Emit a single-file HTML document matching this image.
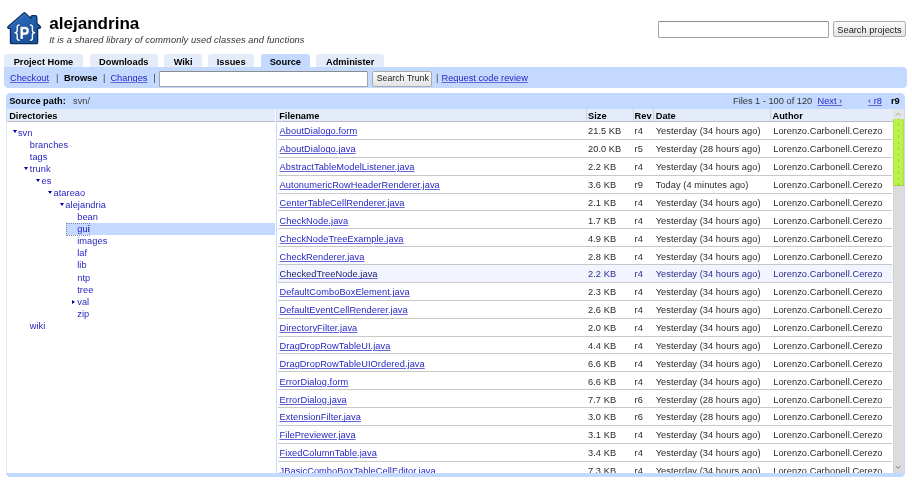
<!DOCTYPE html>
<html><head><meta charset="utf-8">
<style>
html,body{margin:0;padding:0;background:#fff;overflow:hidden}
#pg{will-change:transform;position:relative;width:1280px;height:696px;zoom:0.7125;font-family:"Liberation Sans",sans-serif;font-size:13px;color:#000;overflow:hidden}
a{color:#2626c2;text-decoration-color:#6666d6}
.abs{position:absolute}
.t{position:absolute;line-height:17px;white-space:nowrap}
.sepb{color:#444}
#pname{left:69px;top:18.5px;font-size:24px;font-weight:bold;line-height:32px;white-space:nowrap}
#psum{left:69px;top:48px;letter-spacing:0.14px;font-size:13px;font-style:italic;line-height:17px;white-space:nowrap;color:#333}
.inp{border:1px solid #a4a4a4;border-top-color:#8c8c8c;border-radius:2px;background:#fff;box-sizing:border-box}
.btn{border:1px solid #aaa;border-radius:3px;background:linear-gradient(#fbfbfb,#e3e3e3);box-sizing:border-box;font-size:13px;color:#222;text-align:center;white-space:nowrap}
.tab{position:absolute;top:76.4px;height:17.6px;background:#e5ecf9;border-radius:4px 4px 0 0;font-weight:bold;text-align:center;line-height:24.1px;white-space:nowrap;overflow:hidden}
.tab.on{background:#c3d9ff}
#subnav{left:6px;top:94px;width:1267px;height:30px;background:#c3d9ff;border-radius:0 6px 6px 6px}
#srcbar{left:9px;top:131px;width:1261px;height:538px;background:#c3d9ff;border-radius:6px}
#dirs{left:10px;top:152.7px;width:1243.5px;height:511px;background:#fff}
.hdr{position:absolute;top:0;height:17.5px;background:#e5ecf9;border-bottom:1px solid #bbc;font-weight:bold;line-height:19px;white-space:nowrap}
.hdr.h{box-sizing:border-box;padding-left:3px;border-left:1px solid #fff;background:transparent;border-bottom:none;height:18px}
#files{left:387.6px;top:152.7px;width:1px;height:511px;background:#c3d9ff}
.hb{top:152.7px;height:16.7px;background:#e5ecf9;border-bottom:1px solid #bbc}
.vd{top:152.7px;width:1px;height:17px;background:#cfd3dd}
#sb{left:1253.8px;top:152.7px;width:15.4px;height:510.9px;background:#dcdcdc;box-shadow:inset 1px 0 0 #d0d0d0}
.thumb{background:#bcf24c radial-gradient(circle at 50% 50%,rgba(110,160,30,.45) 0,rgba(110,160,30,.45) 0.9px,transparent 1.4px) 0 4px/15px 8.4px;box-shadow:inset 1px 0 0 #a8de3a,inset -1px 0 0 #a2d834,inset 0 -1px 0 #98cc2c}
.tree .ti{position:absolute;height:17px;line-height:17px;color:#2626c2;white-space:nowrap;letter-spacing:0.08px}
.tri{position:absolute;left:-7.5px;top:5.2px;width:0;height:0;border-left:3.5px solid transparent;border-right:3.5px solid transparent;border-top:4.6px solid #00a}
.trir{position:absolute;left:-7.6px;top:6px;width:0;height:0;border-top:3.6px solid transparent;border-bottom:3.6px solid transparent;border-left:4.4px solid #00a}
.selbg{position:absolute;left:93px;width:293px;height:16.5px;margin-top:0;background:#c3d9ff}
.focus{position:absolute;width:30.5px;height:15.5px;margin-top:0;border:1px dotted #8088a8}
.files .r{position:absolute;left:0;top:0;width:1px;height:17px;line-height:17px;white-space:nowrap;color:#2a2a2a;letter-spacing:0.08px}
.files .r a,.files .r span{position:absolute;top:0}
.files .sep{position:absolute;left:389.5px;width:862.5px;height:1px;background:#c8c8c8}
.files .hovbg{position:absolute;left:389.5px;width:864px;background:#f2f4ff}
.files .hov span{color:#2c2c8c}
.files .hov a{color:#202070}
</style></head><body>
<div id="pg">
 <!-- logo -->
 <svg class="abs" style="left:0;top:0" width="84.21" height="70.18" viewBox="0 0 60 50">
  <defs><linearGradient id="hg" x1="0" y1="0" x2="0.6" y2="1"><stop offset="0" stop-color="#2c70c4"/><stop offset="1" stop-color="#1a5099"/></linearGradient></defs>
  <path d="M23.6 13.2 Q24.4 12.4 25.2 13.2 L30.9 18.4 L30.9 17.2 Q30.9 15.6 32.5 15.6 L35.2 15.6 Q36.8 15.6 36.8 17.2 L36.9 23.4 L40.3 26.5 Q41 27.8 39.6 28.2 L37.6 28.4 L37.6 42.4 Q37.6 43.6 36.4 43.6 L11.7 43.6 Q10.5 43.6 10.5 42.4 L10.5 28.6 L8.6 28.4 Q7.2 28 8 26.8 Z" fill="url(#hg)" stroke="#0b2c60" stroke-width="1.4" stroke-linejoin="round"/>
  <path d="M9.4 26.9 L24.4 13.8 L30 18.9" fill="none" stroke="#5c93dc" stroke-width="0.7" opacity="0.7"/>
  <g fill="none" stroke="#0d3570" stroke-width="3" stroke-linecap="round" stroke-linejoin="round" opacity="0.55">
   <path d="M19.2 25 Q17.2 25 17.2 27 L17.2 30.6 Q17.2 32.5 15 32.7 Q17.2 32.9 17.2 34.8 L17.2 38.2 Q17.2 40.2 19.2 40.2"/>
   <path d="M30.4 25 Q32.4 25 32.4 27 L32.4 30.6 Q32.4 32.5 34.6 32.7 Q32.4 32.9 32.4 34.8 L32.4 38.2 Q32.4 40.2 30.4 40.2"/>
  </g>
  <g fill="none" stroke="#f4f8ff" stroke-width="1.5" stroke-linecap="round" stroke-linejoin="round">
   <path d="M19.2 25 Q17.2 25 17.2 27 L17.2 30.6 Q17.2 32.5 15 32.7 Q17.2 32.9 17.2 34.8 L17.2 38.2 Q17.2 40.2 19.2 40.2"/>
   <path d="M30.4 25 Q32.4 25 32.4 27 L32.4 30.6 Q32.4 32.5 34.6 32.7 Q32.4 32.9 32.4 34.8 L32.4 38.2 Q32.4 40.2 30.4 40.2"/>
  </g>
  <path d="M20.3 26.8 L25.6 26.8 Q29 26.8 29 30.8 Q29 34.9 25.6 34.9 L23.1 34.9 L23.1 39.1 L20.3 39.1 Z M23.1 29.2 L23.1 32.3 L25.2 32.3 Q26.3 32.3 26.3 30.75 Q26.3 29.2 25.2 29.2 Z" fill="#fff" fill-rule="evenodd" stroke="#0d3570" stroke-width="0.5" stroke-opacity="0.5"/>
 </svg>
 <div id="pname" class="abs">alejandrina</div>
 <div id="psum" class="abs">It is a shared library of commonly used classes and functions</div>
 <div class="abs inp" style="left:923px;top:30px;width:240px;height:22.8px"></div>
 <div class="abs btn" style="left:1169.3px;top:30px;width:102.2px;height:21.5px"></div>
 <div class="t" style="left:1175.2px;top:33.9px;color:#222">Search projects</div>

 <div class="tab" style="left:6px;width:110px">Project Home</div>
 <div class="tab" style="left:126px;width:95.5px">Downloads</div>
 <div class="tab" style="left:230px;width:54px">Wiki</div>
 <div class="tab" style="left:292px;width:65px">Issues</div>
 <div class="tab on" style="left:366px;width:69px">Source</div>
 <div class="tab" style="left:444px;width:95px">Administer</div>

 <div id="subnav" class="abs"></div>
 <div class="t" style="left:14px;top:101.2px"><a href="#">Checkout</a></div>
 <div class="t sepb" style="left:78.5px;top:101.2px">|</div>
 <div class="t" style="left:89.8px;top:101.2px"><b>Browse</b></div>
 <div class="t sepb" style="left:144.5px;top:101.2px">|</div>
 <div class="t" style="left:155px;top:101.2px"><a href="#">Changes</a></div>
 <div class="t sepb" style="left:215.2px;top:101.2px">|</div>
 <div class="abs inp" style="left:223px;top:99.5px;width:293px;height:22.3px"></div>
 <div class="abs btn" style="left:522px;top:99px;width:84.6px;height:22.5px"></div>
 <div class="t" style="left:528.8px;top:101.2px;font-size:12.3px;color:#222">Search Trunk</div>
 <div class="t sepb" style="left:611.8px;top:101.2px">|</div>
 <div class="t" style="left:619.6px;top:101.2px"><a href="#">Request code review</a></div>

 <div id="srcbar" class="abs"></div>
 <div class="t" style="left:12.9px;top:133.2px"><b>Source path:</b></div>
 <div class="t" style="left:102.5px;top:133.2px;color:#444">svn/</div>
 <div class="t" style="left:1028.8px;top:134px;color:#333">Files 1 - 100 of 120</div>
 <div class="t" style="left:1147.4px;top:134px"><a href="#">Next ›</a></div>
 <div class="t" style="left:1218.3px;top:134px"><a href="#">‹ r8</a></div>
 <div class="t" style="left:1250.5px;top:134px"><b>r9</b></div>

 <div id="dirs" class="abs"></div>
 <div class="abs" style="left:9px;top:170px;width:1px;height:493.6px;background:#e0eaff"></div>
 <div class="abs hb" style="left:10px;width:376px"></div>
 <div class="abs hb" style="left:388.6px;width:865px"></div>
 <div class="abs vd" style="left:823px"></div>
 <div class="abs vd" style="left:888px"></div>
 <div class="abs vd" style="left:916.8px"></div>
 <div class="abs vd" style="left:1081.3px"></div>
 <div class="t" style="left:12.9px;top:153.8px"><b>Directories</b></div>
 <div class="t" style="left:391.9px;top:153.8px"><b>Filename</b></div>
 <div class="t" style="left:825.3px;top:153.8px"><b>Size</b></div>
 <div class="t" style="left:890.7px;top:153.8px"><b>Rev</b></div>
 <div class="t" style="left:920.3px;top:153.8px"><b>Date</b></div>
 <div class="t" style="left:1084.2px;top:153.8px"><b>Author</b></div>
 <div id="files" class="abs"></div>
 <div class="files" style="position:absolute;left:0;top:0;width:1280px;height:663.6px;overflow:hidden">
<div class="hovbg" style="top:371.63px;height:24.09px"></div>
<div class="sep" style="top:195.00px"></div>
<div class="r" style="top:176.10px"><a href="#" style="left:392.4px">AboutDialogo.form</a><span style="left:825.3px">21.5 KB</span><span style="left:890.7px">r4</span><span style="left:920.3px">Yesterday (34 hours ago)</span><span style="left:1085.2px">Lorenzo.Carbonell.Cerezo</span></div>
<div class="sep" style="top:220.09px"></div>
<div class="r" style="top:201.19px"><a href="#" style="left:392.4px">AboutDialogo.java</a><span style="left:825.3px">20.0 KB</span><span style="left:890.7px">r5</span><span style="left:920.3px">Yesterday (28 hours ago)</span><span style="left:1085.2px">Lorenzo.Carbonell.Cerezo</span></div>
<div class="sep" style="top:245.18px"></div>
<div class="r" style="top:226.28px"><a href="#" style="left:392.4px">AbstractTableModelListener.java</a><span style="left:825.3px">2.2 KB</span><span style="left:890.7px">r4</span><span style="left:920.3px">Yesterday (34 hours ago)</span><span style="left:1085.2px">Lorenzo.Carbonell.Cerezo</span></div>
<div class="sep" style="top:270.27px"></div>
<div class="r" style="top:251.37px"><a href="#" style="left:392.4px">AutonumericRowHeaderRenderer.java</a><span style="left:825.3px">3.6 KB</span><span style="left:890.7px">r9</span><span style="left:920.3px">Today (4 minutes ago)</span><span style="left:1085.2px">Lorenzo.Carbonell.Cerezo</span></div>
<div class="sep" style="top:295.36px"></div>
<div class="r" style="top:276.46px"><a href="#" style="left:392.4px">CenterTableCellRenderer.java</a><span style="left:825.3px">2.1 KB</span><span style="left:890.7px">r4</span><span style="left:920.3px">Yesterday (34 hours ago)</span><span style="left:1085.2px">Lorenzo.Carbonell.Cerezo</span></div>
<div class="sep" style="top:320.45px"></div>
<div class="r" style="top:301.55px"><a href="#" style="left:392.4px">CheckNode.java</a><span style="left:825.3px">1.7 KB</span><span style="left:890.7px">r4</span><span style="left:920.3px">Yesterday (34 hours ago)</span><span style="left:1085.2px">Lorenzo.Carbonell.Cerezo</span></div>
<div class="sep" style="top:345.54px"></div>
<div class="r" style="top:326.64px"><a href="#" style="left:392.4px">CheckNodeTreeExample.java</a><span style="left:825.3px">4.9 KB</span><span style="left:890.7px">r4</span><span style="left:920.3px">Yesterday (34 hours ago)</span><span style="left:1085.2px">Lorenzo.Carbonell.Cerezo</span></div>
<div class="sep" style="top:370.63px"></div>
<div class="r" style="top:351.73px"><a href="#" style="left:392.4px">CheckRenderer.java</a><span style="left:825.3px">2.8 KB</span><span style="left:890.7px">r4</span><span style="left:920.3px">Yesterday (34 hours ago)</span><span style="left:1085.2px">Lorenzo.Carbonell.Cerezo</span></div>
<div class="sep" style="top:395.72px"></div>
<div class="r hov" style="top:376.82px"><a href="#" style="left:392.4px">CheckedTreeNode.java</a><span style="left:825.3px">2.2 KB</span><span style="left:890.7px">r4</span><span style="left:920.3px">Yesterday (34 hours ago)</span><span style="left:1085.2px">Lorenzo.Carbonell.Cerezo</span></div>
<div class="sep" style="top:420.81px"></div>
<div class="r" style="top:401.91px"><a href="#" style="left:392.4px">DefaultComboBoxElement.java</a><span style="left:825.3px">2.3 KB</span><span style="left:890.7px">r4</span><span style="left:920.3px">Yesterday (34 hours ago)</span><span style="left:1085.2px">Lorenzo.Carbonell.Cerezo</span></div>
<div class="sep" style="top:445.90px"></div>
<div class="r" style="top:427.00px"><a href="#" style="left:392.4px">DefaultEventCellRenderer.java</a><span style="left:825.3px">2.6 KB</span><span style="left:890.7px">r4</span><span style="left:920.3px">Yesterday (34 hours ago)</span><span style="left:1085.2px">Lorenzo.Carbonell.Cerezo</span></div>
<div class="sep" style="top:470.99px"></div>
<div class="r" style="top:452.09px"><a href="#" style="left:392.4px">DirectoryFilter.java</a><span style="left:825.3px">2.0 KB</span><span style="left:890.7px">r4</span><span style="left:920.3px">Yesterday (34 hours ago)</span><span style="left:1085.2px">Lorenzo.Carbonell.Cerezo</span></div>
<div class="sep" style="top:496.08px"></div>
<div class="r" style="top:477.18px"><a href="#" style="left:392.4px">DragDropRowTableUI.java</a><span style="left:825.3px">4.4 KB</span><span style="left:890.7px">r4</span><span style="left:920.3px">Yesterday (34 hours ago)</span><span style="left:1085.2px">Lorenzo.Carbonell.Cerezo</span></div>
<div class="sep" style="top:521.17px"></div>
<div class="r" style="top:502.27px"><a href="#" style="left:392.4px">DragDropRowTableUIOrdered.java</a><span style="left:825.3px">6.6 KB</span><span style="left:890.7px">r4</span><span style="left:920.3px">Yesterday (34 hours ago)</span><span style="left:1085.2px">Lorenzo.Carbonell.Cerezo</span></div>
<div class="sep" style="top:546.26px"></div>
<div class="r" style="top:527.36px"><a href="#" style="left:392.4px">ErrorDialog.form</a><span style="left:825.3px">6.6 KB</span><span style="left:890.7px">r4</span><span style="left:920.3px">Yesterday (34 hours ago)</span><span style="left:1085.2px">Lorenzo.Carbonell.Cerezo</span></div>
<div class="sep" style="top:571.35px"></div>
<div class="r" style="top:552.45px"><a href="#" style="left:392.4px">ErrorDialog.java</a><span style="left:825.3px">7.7 KB</span><span style="left:890.7px">r6</span><span style="left:920.3px">Yesterday (28 hours ago)</span><span style="left:1085.2px">Lorenzo.Carbonell.Cerezo</span></div>
<div class="sep" style="top:596.44px"></div>
<div class="r" style="top:577.54px"><a href="#" style="left:392.4px">ExtensionFilter.java</a><span style="left:825.3px">3.0 KB</span><span style="left:890.7px">r6</span><span style="left:920.3px">Yesterday (28 hours ago)</span><span style="left:1085.2px">Lorenzo.Carbonell.Cerezo</span></div>
<div class="sep" style="top:621.53px"></div>
<div class="r" style="top:602.63px"><a href="#" style="left:392.4px">FilePreviewer.java</a><span style="left:825.3px">3.1 KB</span><span style="left:890.7px">r4</span><span style="left:920.3px">Yesterday (34 hours ago)</span><span style="left:1085.2px">Lorenzo.Carbonell.Cerezo</span></div>
<div class="sep" style="top:646.62px"></div>
<div class="r" style="top:627.72px"><a href="#" style="left:392.4px">FixedColumnTable.java</a><span style="left:825.3px">3.4 KB</span><span style="left:890.7px">r4</span><span style="left:920.3px">Yesterday (34 hours ago)</span><span style="left:1085.2px">Lorenzo.Carbonell.Cerezo</span></div>
<div class="r" style="top:652.81px"><a href="#" style="left:392.4px">JBasicComboBoxTableCellEditor.java</a><span style="left:825.3px">7.3 KB</span><span style="left:890.7px">r4</span><span style="left:920.3px">Yesterday (34 hours ago)</span><span style="left:1085.2px">Lorenzo.Carbonell.Cerezo</span></div>

 </div>
 <div id="sb" class="abs"></div>
 <div class="abs" style="left:1253.8px;top:152.7px;width:15.4px;height:14.8px;background:#e4e4e4"></div>
 <svg class="abs" style="left:1253.8px;top:152.7px" width="14.4" height="14.8" viewBox="0 0 14 14"><path d="M4 8.5 L7 5.5 L10 8.5" fill="none" stroke="#999" stroke-width="1.2"/></svg>
 <div class="abs thumb" style="left:1254px;top:167.7px;width:15px;height:93.6px"></div>
 <svg class="abs" style="left:1253.8px;top:648.8px" width="14.4" height="14.8" viewBox="0 0 14 14"><path d="M4 5.5 L7 8.5 L10 5.5" fill="none" stroke="#707070" stroke-width="1.3"/></svg>
 <div class="tree">
<div class="ti" style="left:25.12px;top:177.87px"><i class="tri"></i>svn</div>
<div class="ti" style="left:41.77px;top:194.81px">branches</div>
<div class="ti" style="left:41.77px;top:211.75px">tags</div>
<div class="ti" style="left:41.77px;top:228.69px"><i class="tri"></i>trunk</div>
<div class="ti" style="left:58.42px;top:245.63px"><i class="tri"></i>es</div>
<div class="ti" style="left:75.07px;top:262.57px"><i class="tri"></i>atareao</div>
<div class="ti" style="left:91.72px;top:279.51px"><i class="tri"></i>alejandria</div>
<div class="ti" style="left:108.37px;top:296.45px">bean</div>
<div class="selbg" style="top:313.39px"></div>
<div class="focus" style="left:92.37px;top:313.39px"></div>
<div class="ti" style="left:108.37px;top:313.39px">gui</div>
<div class="ti" style="left:108.37px;top:330.33px">images</div>
<div class="ti" style="left:108.37px;top:347.27px">laf</div>
<div class="ti" style="left:108.37px;top:364.21px">lib</div>
<div class="ti" style="left:108.37px;top:381.15px">ntp</div>
<div class="ti" style="left:108.37px;top:398.09px">tree</div>
<div class="ti" style="left:108.37px;top:415.03px"><i class="trir"></i>val</div>
<div class="ti" style="left:108.37px;top:431.97px">zip</div>
<div class="ti" style="left:41.77px;top:448.91px">wiki</div>

 </div>
</div>
</body></html>
